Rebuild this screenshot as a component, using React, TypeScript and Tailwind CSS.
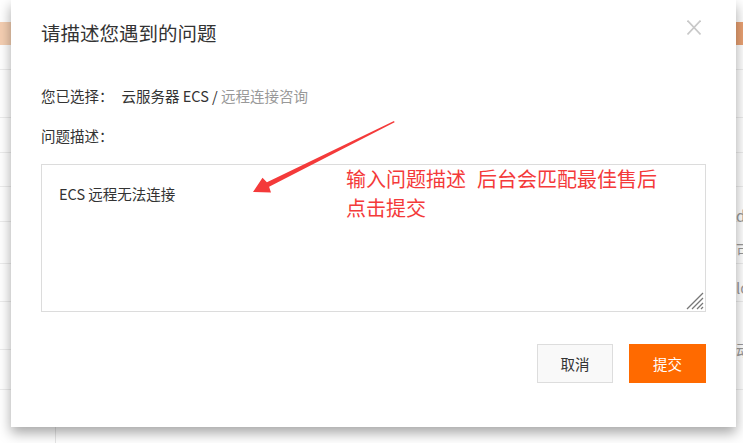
const bgRows = [25, 48, 35, 34, 35, 42, 38, 48, 40];

function Arrow() {
  return (
    <svg
      className="pointer-events-none absolute left-0 top-0"
      width="743"
      height="443"
      viewBox="0 0 743 443"
    >
      <polygon
        points="394,121 266.9,182.3 262.5,177.8 253,192 271,192.6 269.1,186.7 394.6,122.3"
        fill="#f43a3a"
      />
    </svg>
  );
}

export default function App() {
  return (
    <div className="relative h-[443px] w-[743px] overflow-hidden bg-white font-['Noto_Sans_CJK_SC','Noto_Sans',sans-serif]">
      {/* page behind the dialog */}
      <div className="flex h-full flex-col">
        <div className="h-[22px]" />
        <div className="flex h-[23px]">
          <div className="w-[11px] bg-[#f5cfb2]" />
          <div className="flex-1" />
          <div className="w-[7px] bg-[#e9a172]" />
        </div>
        {bgRows.map((h, i) => (
          <div key={i} style={{ height: h }} className="border-b border-[#ececec]" />
        ))}
        <div className="flex flex-1">
          <div className="ml-[55px] border-l border-[#e6e6e6]" />
        </div>
      </div>

      <div className="absolute right-0 top-[206px] flex w-[7px] flex-col overflow-hidden text-[15px] leading-[20px] text-[#999]">
        <span className="mb-[14px]">d</span>
        <span className="mb-[18px]">可</span>
        <span className="mb-[42px]">lo</span>
        <span>动</span>
      </div>

      {/* dialog */}
      <div className="absolute left-[11px] top-0 flex h-[427px] w-[725px] flex-col bg-white px-[30px] pt-[21px] shadow-[0_6px_12px_rgba(0,0,0,0.35)]">
        <div className="flex items-start justify-between">
          <h1 className="text-[19.5px] leading-[24px] text-[#333]">
            请描述您遇到的问题
          </h1>
          <svg
            className="mr-[5px] mt-[-1px]"
            width="14"
            height="15"
            viewBox="0 0 14 15"
          >
            <g stroke="#c8c8c8" strokeWidth="1.6">
              <line x1="0.5" y1="0.5" x2="13.5" y2="14.5" />
              <line x1="13.5" y1="0.5" x2="0.5" y2="14.5" />
            </g>
          </svg>
        </div>

        <p className="mt-[41px] text-[14.5px] leading-[20px] text-[#333]">
          您已选择：
          <span className="ml-[8px]">云服务器 ECS / </span>
          <span className="text-[#999]">远程连接咨询</span>
        </p>

        <p className="mt-[20px] text-[14.5px] leading-[20px] text-[#333]">
          问题描述：
        </p>

        <div className="relative mt-[18px] h-[148px]">
          <textarea
            readOnly
            defaultValue="ECS 远程无法连接"
            className="h-full w-full resize-none border border-[#dcdcdc] px-[17px] pt-[19px] text-[14.5px] leading-[20px] text-[#333] outline-none"
          />
          <svg
            className="absolute bottom-[2px] right-[2px]"
            width="18"
            height="18"
            viewBox="0 0 18 18"
          >
            <g stroke="#777" strokeWidth="1.2">
              <line x1="17" y1="1" x2="1" y2="17" />
              <line x1="17" y1="6" x2="6" y2="17" />
              <line x1="17" y1="11" x2="11" y2="17" />
              <line x1="17" y1="15" x2="15" y2="17" />
            </g>
          </svg>
        </div>

        <div className="mt-[32px] flex justify-end gap-[16px]">
          <button
            type="button"
            className="h-[39px] w-[76px] border border-[#ddd] bg-[#f9f9f9] text-[14.5px] text-[#333]"
          >
            取消
          </button>
          <button
            type="button"
            className="h-[39px] w-[77px] bg-[#ff6a00] text-[14.5px] text-white"
          >
            提交
          </button>
        </div>
      </div>

      {/* annotation */}
      <Arrow />
      <div className="absolute left-[346px] top-[164px] text-[20px] leading-[29px] text-[#f43a3a]">
        <p>
          输入问题描述<span className="inline-block w-[11px]" />
          后台会匹配最佳售后
        </p>
        <p>点击提交</p>
      </div>
    </div>
  );
}
